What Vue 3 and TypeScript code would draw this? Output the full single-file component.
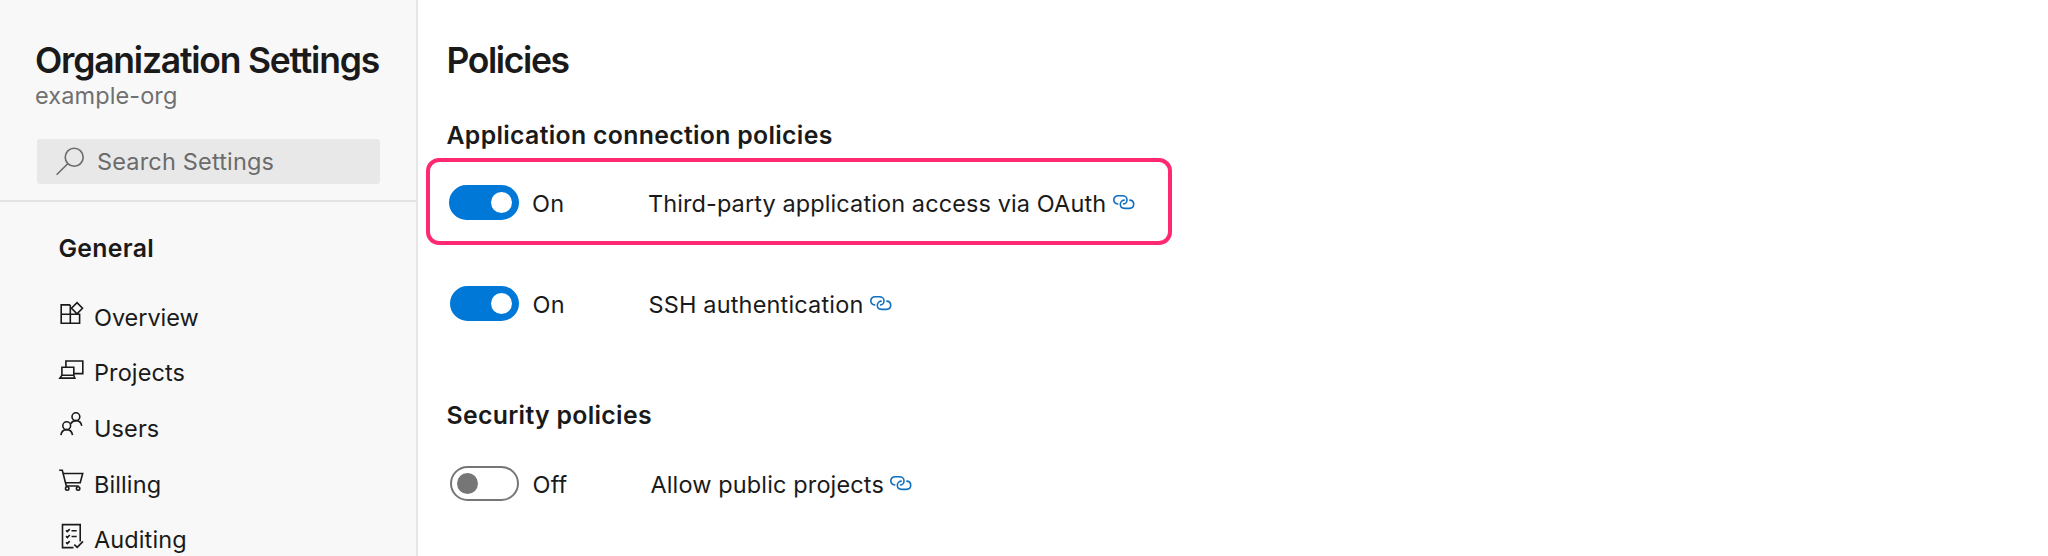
<script setup lang="ts">
interface Policy {
  label: string
  enabled: boolean
  cls: string
}
interface PolicySection {
  title: string
  policies: Policy[]
}
interface NavItem {
  label: string
  icon: string
}

const nav: NavItem[] = [
  { label: 'Overview', icon: 'overview' },
  { label: 'Projects', icon: 'projects' },
  { label: 'Users', icon: 'users' },
  { label: 'Billing', icon: 'billing' },
  { label: 'Auditing', icon: 'auditing' },
]

const sections: PolicySection[] = [
  {
    title: 'Application connection policies',
    policies: [
      { label: 'Third-party application access via OAuth', enabled: true, cls: 'oauth' },
      { label: 'SSH authentication', enabled: true, cls: 'ssh' },
    ],
  },
  {
    title: 'Security policies',
    policies: [{ label: 'Allow public projects', enabled: false, cls: 'public' }],
  },
]
</script>

<template>
  <div class="page">
    <aside class="sidebar">
      <header class="org">
        <h1 class="title">Organization Settings</h1>
        <div class="org-name">example-org</div>
        <div class="search">
          <svg class="search-icon" viewBox="0 0 30 30"><circle cx="19.2" cy="11.3" r="9" /><path d="M12.7 17.8 1.6 28.8" /></svg>
          <span class="search-text">Search Settings</span>
        </div>
      </header>
      <h2 class="group">General</h2>
      <nav>
        <a v-for="item in nav" :key="item.icon" class="nav-item">
          <svg class="nav-icon" viewBox="0 0 26 26">
            <template v-if="item.icon === 'overview'">
              <path d="M12.3 4.9H3.2v18.4h18.4v-9.1H3.2M12.3 4.9v18.4M19 2.6l5.5 5.6-5.5 5.6-5.5-5.6z" />
            </template>
            <template v-else-if="item.icon === 'projects'">
              <path d="M7.9 11.3V5h16.9v12.6h-9M3.9 19.3v-8h11.9v8M3.9 19.3h11.9l1 2.8H1.9z" />
            </template>
            <template v-else-if="item.icon === 'users'">
              <circle cx="17.9" cy="5.7" r="3.9" /><circle cx="8.7" cy="14.7" r="3.9" />
              <path d="M2.9 24.1c.5-3.5 2.8-5.5 5.8-5.5s5.3 2 5.8 5.5M12.7 12.9c1-2.1 2.9-3.3 5.2-3.3 3.1 0 5.4 2 5.8 5.3" />
            </template>
            <template v-else-if="item.icon === 'billing'">
              <path d="M1.2 3.3h3.1L8.3 19h12.4M5.2 6.5h19.5l-2.5 9.2H7.500" />
              <circle cx="9.2" cy="21.5" r="1.7" /><circle cx="20.1" cy="21.5" r="1.7" />
            </template>
            <template v-else>
              <path d="M15.5 24.6H4.5v-23h17.7v16.9M16.3 21.6l2.9 2.8 5.8-6M8 7.3l1.4 1.3 2.3-2.5M8 13.2l1.4 1.3 2.3-2.5M8 19.3l1.4 1.3 2.3-2.5M13.5 7.7h5.2M13.5 13.5h5.2" />
            </template>
          </svg>
          <span class="nav-label" :class="item.icon">{{ item.label }}</span>
        </a>
      </nav>
    </aside>

    <main class="content">
      <h1 class="heading">Policies</h1>
      <section v-for="s in sections" :key="s.title" class="section">
        <h2 class="section-title">{{ s.title }}</h2>
        <div v-for="p in s.policies" :key="p.cls" class="row" :class="p.cls">
          <div class="toggle" :class="{ on: p.enabled }"><span class="knob"></span></div>
          <span class="state">{{ p.enabled ? 'On' : 'Off' }}</span>
          <span class="label">{{ p.label }}</span>
          <svg class="link" viewBox="0 0 22 15">
            <path d="M5.3 9C2.7 9 .8 7.4.8 4.9S2.7.8 5.2.8h4.2C11.900.8 14 2.500 14 4.900S12 9 9.900 9M11.700 5.100C9.300 5.100 7.300 6.800 7.300 9.300s2 4.100 4.500 4.100h4.400c2.500 0 4.500-1.600 4.500-4.100s-1.900-4.200-4.400-4.200" />
          </svg>
        </div>
      </section>
    </main>
  </div>
</template>

<style>
body {
  margin: 0;
}
</style>
<style scoped>
.page {
  display: flex;
  width: 2048px;
  height: 556px;
  overflow: hidden;
  background: #fff;
  color: #1a1a1a;
  font-family: Inter, "Liberation Sans", sans-serif;
  font-size: 23.5px;
  letter-spacing: 0.1px;
  white-space: nowrap;
}
h1, h2 { margin: 0; font-weight: 600; }
.sidebar {
  box-sizing: border-box;
  width: 418px;
  height: 556px;
  flex: none;
  background: #f8f8f8;
  border-right: 2px solid #e6e6e6;
}
.org {
  box-sizing: border-box;
  height: 202px;
  padding: 40px 36px 0 35px;
  border-bottom: 2px solid #e4e4e4;
}
.title, .heading { font-size: 35.5px; line-height: 42px; letter-spacing: -1.22px; }
.heading { letter-spacing: -1.4px; }
.org-name { line-height: 28px; color: #707070; }
.search {
  display: flex;
  align-items: center;
  height: 45.5px;
  margin: 28.5px 0 0 2px;
  border-radius: 3px;
  background: #e8e8e8;
  color: #6b6b6b;
  letter-spacing: 0.17px;
}
.search-icon { width: 30px; height: 30px; margin: 0 12.5px 0 17.5px; }
.search-text { padding-top: 1px; }
svg { flex: none; fill: none; stroke: currentColor; stroke-width: 1.6; }
.group { margin: 31px 0 0 58.5px; font-size: 24.8px; line-height: 30px; letter-spacing: 0.3px; }
nav { margin-top: 26px; }
.nav-item { display: flex; align-items: center; height: 55.6px; padding-left: 58px; }
.nav-icon { width: 26px; height: 26px; margin: 0 10px 7px 0; }
.nav-label { padding-top: 1.2px; }
.overview { letter-spacing: -0.05px; }
.content { width: 1100px; padding: 40px 0 0 28.5px; }
.section { margin-top: 38px; }
.section + .section { margin-top: 79px; }
.section-title { font-size: 24.8px; line-height: 30px; letter-spacing: 0.32px; }
.row { display: flex; align-items: center; height: 35px; padding-left: 3px; }
.oauth {
  box-sizing: border-box;
  width: 745.5px;
  height: 86.5px;
  margin: 8px 0 0 -20.5px;
  padding: 3px 0 0 19px;
  border: 4.5px solid #ff2873;
  border-radius: 13px;
}
.ssh { margin-top: 41.5px; }
.ssh .label { letter-spacing: 0.17px; }
.public { margin-top: 36px; }
.public .label { margin-left: 2px; letter-spacing: 0.13px; }
.toggle {
  box-sizing: border-box;
  display: flex;
  align-items: center;
  width: 69.5px;
  height: 35px;
  padding: 0 5px;
  border: 2px solid #767676;
  border-radius: 18px;
  color: #767676;
}
.toggle.on { justify-content: flex-end; border-color: #0078d7; background: #0078d7; color: #fff; }
.knob { width: 21px; height: 21px; border-radius: 50%; background: currentColor; }
.state { width: 115.8px; margin-left: 13.6px; padding-top: 2px; }
.label { padding-top: 2px; }
.link { width: 22px; height: 15px; margin-left: 6.500px; color: #106ebe; }
</style>
